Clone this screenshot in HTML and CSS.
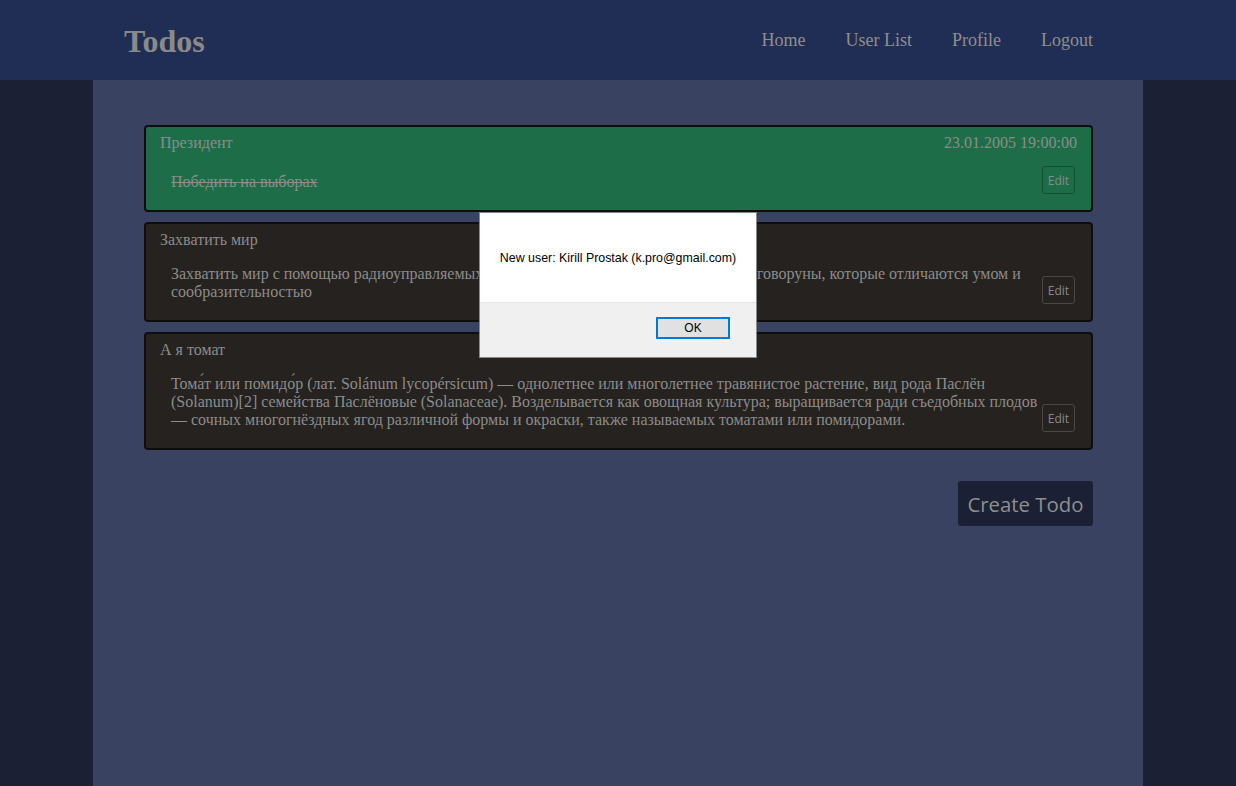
FILE: index.html
```html
<!DOCTYPE html>
<html lang="ru">
<head>
<meta charset="utf-8">
<title>Todos</title>
<link rel="stylesheet" href="styles.css">
</head>
<body>
<header class="topbar">
  <div class="topbar-inner">
    <a class="brand" href="#">Todos</a>
    <nav class="nav">
      <a href="#">Home</a>
      <a href="#">User List</a>
      <a href="#">Profile</a>
      <a href="#">Logout</a>
    </nav>
  </div>
</header>
<main class="page">
  <div class="list">
    <div class="card card-done">
      <div class="card-head"><span class="card-title">Президент</span><span class="card-date">23.01.2005 19:00:00</span></div>
      <div class="card-body">
        <div class="card-text done">Победить на выборах</div>
        <button class="edit edit-green">Edit</button>
      </div>
    </div>
    <div class="card">
      <div class="card-head"><span class="card-title">Захватить мир</span></div>
      <div class="card-body">
        <div class="card-text">Захватить мир с помощью радиоуправляемых металлических птиц, таких, как птицы-говоруны, которые отличаются умом и сообразительностью</div>
        <button class="edit">Edit</button>
      </div>
    </div>
    <div class="card">
      <div class="card-head"><span class="card-title">А я томат</span></div>
      <div class="card-body">
        <div class="card-text">Тома́т или помидо́р (лат. Solánum lycopérsicum) — однолетнее или многолетнее травянистое растение, вид рода Паслён (Solanum)[2] семейства Паслёновые (Solanaceae). Возделывается как овощная культура; выращивается ради съедобных плодов — сочных многогнёздных ягод различной формы и окраски, также называемых томатами или помидорами.</div>
        <button class="edit">Edit</button>
      </div>
    </div>
  </div>
  <div class="actions">
    <button class="create">Create Todo</button>
  </div>
</main>
<div class="alert">
  <div class="alert-msg">New user: Kirill Prostak (k.pro@gmail.com)</div>
  <div class="alert-foot"><button class="alert-ok">OK</button></div>
</div>
</body>
</html>
```
FILE: styles.css
```css
html, body {
  margin: 0;
  padding: 0;
}
body {
  background: #1b2035;
  font-family: "Liberation Serif", "Times New Roman", serif;
  color: #8c8c8c;
  min-height: 786px;
}
.topbar {
  background: #202e55;
  height: 80px;
}
.topbar-inner {
  width: 1050px;
  margin: 0 auto;
  height: 80px;
  box-sizing: border-box;
  padding: 0 50px 0 31px;
  display: flex;
  align-items: center;
  justify-content: space-between;
}
.brand {
  font-size: 32px;
  font-weight: bold;
  color: #8a8a8a;
  text-decoration: none;
  margin-top: 2px;
}
.nav {
  display: flex;
  gap: 40px;
}
.nav a {
  font-size: 18px;
  color: #8e8e8e;
  text-decoration: none;
}
.page {
  width: 1050px;
  margin: 0 auto;
  background: #394361;
  min-height: 706px;
  box-sizing: border-box;
  padding: 45px 50px 0 51px;
}
.list {
  display: flex;
  flex-direction: column;
  gap: 10px;
}
.card {
  background: #25221f;
  border: 2px solid #0e0e0e;
  border-radius: 4px;
  padding: 6px 16px 16px 14px;
}
.card-done {
  background: #1d6e48;
}
.card-head {
  display: flex;
  justify-content: space-between;
  font-size: 16px;
  line-height: 19px;
  margin-right: -2px;
}
.card-body {
  display: flex;
  align-items: flex-end;
  gap: 3px;
  margin-top: 14px;
}
.card-text {
  flex: 1;
  font-size: 16px;
  line-height: 18px;
  padding: 2px 0 3px 11px;
}
.done {
  text-decoration: line-through;
}
.edit {
  font-family: "Open Sans", "Noto Sans", sans-serif;
  font-size: 12px;
  color: #8a8a8a;
  background: transparent;
  border: 1px solid #4a4744;
  border-radius: 3px;
  height: 28px;
  width: 33px;
  padding: 0;
  flex: none;
}
.edit-green {
  border-color: #14502f;
}
.actions {
  display: flex;
  justify-content: flex-end;
  margin-top: 31px;
}
.create {
  font-family: "Open Sans", "Noto Sans", sans-serif;
  font-size: 20.4px;
  color: #8f8f8f;
  background: #1b2035;
  border: none;
  border-radius: 3px;
  height: 45px;
  width: 135px;
  padding: 0;
}
.alert {
  position: absolute;
  left: 479px;
  top: 212px;
  width: 276px;
  height: 144px;
  border: 1px solid #8a8a8a;
  background: #ffffff;
  font-family: "Liberation Sans", Arial, sans-serif;
  display: flex;
  flex-direction: column;
}
.alert-msg {
  height: 89px;
  display: flex;
  align-items: center;
  justify-content: center;
  font-size: 12.4px;
  color: #000;
  padding-top: 1px;
  box-sizing: border-box;
}
.alert-foot {
  flex: 1;
  background: #f0f0f0;
  border-top: 1px solid #e4e4e4;
  display: flex;
  justify-content: flex-end;
  align-items: flex-start;
  padding: 14px 26px 0 0;
}
.alert-ok {
  width: 74px;
  height: 22px;
  background: #e1e1e1;
  border: 2px solid #0078d7;
  font-family: "Liberation Sans", Arial, sans-serif;
  font-size: 12px;
  color: #000;
  padding: 0;
}
```
